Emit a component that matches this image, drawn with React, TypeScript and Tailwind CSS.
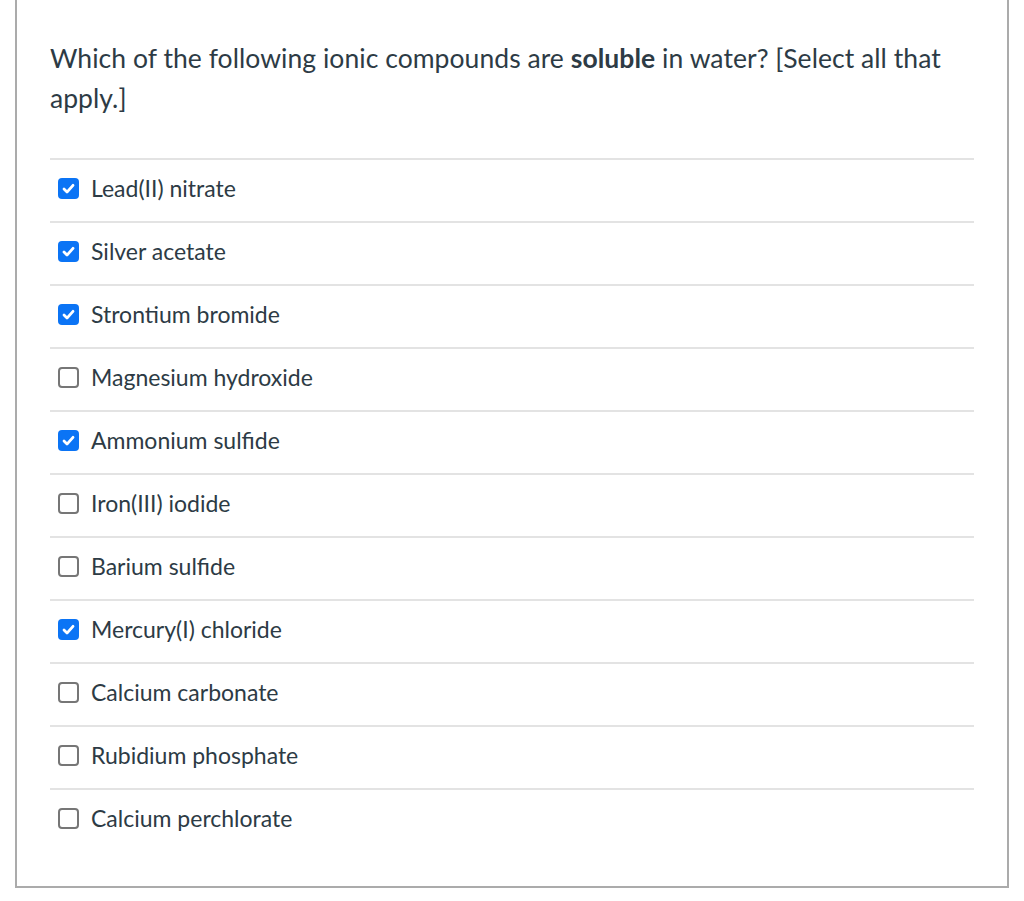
import React from 'react';

const answers: { label: string; checked: boolean }[] = [
  { label: 'Lead(II) nitrate', checked: true },
  { label: 'Silver acetate', checked: true },
  { label: 'Strontium bromide', checked: true },
  { label: 'Magnesium hydroxide', checked: false },
  { label: 'Ammonium sulfide', checked: true },
  { label: 'Iron(III) iodide', checked: false },
  { label: 'Barium sulfide', checked: false },
  { label: 'Mercury(I) chloride', checked: true },
  { label: 'Calcium carbonate', checked: false },
  { label: 'Rubidium phosphate', checked: false },
  { label: 'Calcium perchlorate', checked: false },
];

function Box({ checked }: { checked: boolean }) {
  if (checked) {
    return (
      <span className="flex h-[21px] w-[21px] shrink-0 items-center justify-center rounded-[4px] bg-[#0b74f5]">
        <svg viewBox="0 0 16 16" className="h-[15px] w-[15px]">
          <path d="M3.2 8.6 L6.4 11.8 L12.8 4.6" fill="none" stroke="white" strokeWidth="3" strokeLinecap="round" strokeLinejoin="round" />
        </svg>
      </span>
    );
  }
  return <span className="h-[21px] w-[21px] shrink-0 rounded-[4px] border-2 border-[#767676] bg-white" />;
}

export default function App() {
  return (
    <div className="min-h-[901px] bg-white pl-[15px] pr-[15px]" style={{ fontFamily: 'Lato, "Open Sans", sans-serif' }}>
      <div className="border-x-2 border-b-2 border-[#ababab] px-[33px] pt-[38px] pb-[35px] text-[#2d3b45]">
        <p className="text-[26.5px] leading-[40px] tracking-[0.05px]">
          Which of the following ionic compounds are <strong className="font-bold">soluble</strong> in water? [Select all that apply.]
        </p>
        <div className="mt-[40px]">
          {answers.map((a) => (
            <label key={a.label} className="flex h-[63px] items-center gap-[12px] border-t-2 border-[#e3e3e3] pl-[8px] pb-[5px]">
              <Box checked={a.checked} />
              <span className="text-[23px]">{a.label}</span>
            </label>
          ))}
        </div>
      </div>
    </div>
  );
}
